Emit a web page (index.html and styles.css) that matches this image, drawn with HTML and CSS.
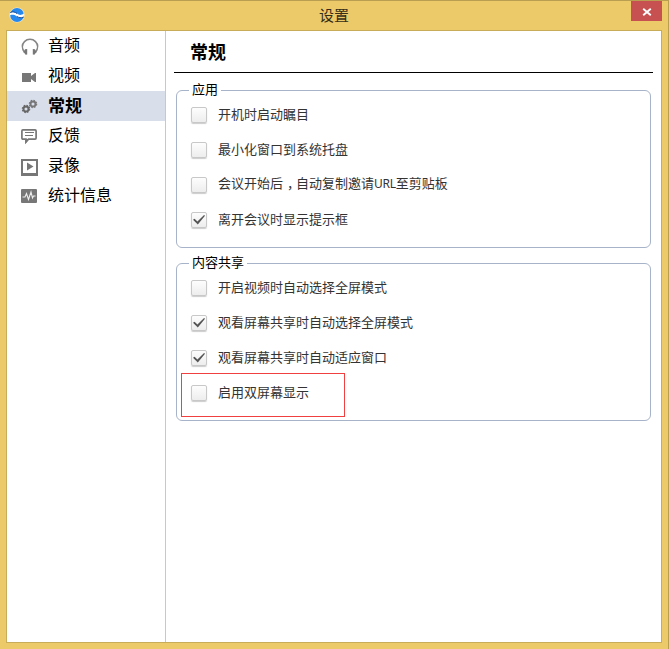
FILE: index.html
```html
<!DOCTYPE html>
<html lang="zh-CN">
<head>
<meta charset="utf-8">
<title>设置</title>
<link rel="stylesheet" href="styles.css">
</head>
<body>
<div class="window">
  <header class="titlebar">
    <svg class="logo" width="16" height="16" viewBox="0 0 16 16">
      <circle cx="8" cy="8" r="7.6" fill="#f5ead0"/>
      <circle cx="8" cy="8" r="6.900" fill="#2588ee"/>
      <path d="M1 5.6C4 4.2 6 5 8 6.6S12 8.7 14.9 6.6V9.8C12 11.6 9.700 10.700 7.500 9.200S3.500 7.500 1 8.200Z" fill="#fff"/>
      <path d="M1.200 5.500C4 4.200 6 5 8 6.500M14.700 10C12 11.400 9.800 10.700 7.800 9.400" fill="none" stroke="#174b94" stroke-width="1"/>
    </svg>
    <h1 class="title">设置</h1>
    <button class="close" aria-label="关闭"><svg width="10" height="10" viewBox="0 0 10 10"><path d="M1.200 1.800L8.800 8.200M8.800 1.800L1.200 8.200" stroke="#fff" stroke-width="1.900"/></svg></button>
  </header>
  <div class="content">
    <nav class="sidebar">
      <a class="item"><svg class="icon" viewBox="0 0 18 18"><path d="M3.600 14.500C.8 10.500.9 6.200 3.500 3.600C6.500.6 11.500.6 14.500 3.600C17.100 6.200 17.200 10.500 14.400 14.500" fill="none" stroke="#858585" stroke-width="1.500"/><path d="M4 11.300L6.200 11V16.500L4.600 16.700L2.600 14ZM14 11.300L11.800 11V16.500L13.400 16.700L15.400 14Z" fill="#777"/></svg><span>音频</span></a>
      <a class="item"><svg class="icon" viewBox="0 0 18 18"><path d="M1 5H10V8L14 5H15V14H14L10 11V14H1Z" fill="#777"/></svg><span>视频</span></a>
      <a class="item selected"><svg class="icon" viewBox="0 1 18 18"><g fill="none" stroke="#666"><circle cx="5" cy="12" r="2.500" stroke-width="1.900"/><circle cx="5" cy="12" r="3.700" stroke-width="1.100" stroke-dasharray="1.600 1.306"/><circle cx="12" cy="7" r="2.500" stroke="#777" stroke-width="1.900"/><circle cx="12" cy="7" r="3.700" stroke="#777" stroke-width="1.100" stroke-dasharray="1.600 1.306"/></g></svg><span>常规</span></a>
      <a class="item"><svg class="icon" viewBox="0 1 18 18"><path d="M1.900 2.900H14.100Q15.100 2.900 15.100 3.900V11.100Q15.100 12.100 14.100 12.100H7.500L5 15V12.100H1.900Q.9 12.100.9 11.100V3.900Q.9 2.900 1.900 2.900Z" fill="none" stroke="#777" stroke-width="1.700"/><path d="M4 5.500H13M4 8.500H12" stroke="#777"/><path d="M4 12H8L4.300 17Z" fill="#777"/></svg><span>反馈</span></a>
      <a class="item"><svg class="icon" viewBox="0 1 18 18"><path d="M0 2H17V19H0ZM2 4V16H15V4Z" fill="#777" fill-rule="evenodd"/><path d="M6 5.500L12.500 9.500L6 13.500Z" fill="#777"/></svg><span>录像</span></a>
      <a class="item"><svg class="icon" viewBox="0 1 18 18"><rect y="2" width="16" height="14" rx="1" fill="#777"/><path d="M1.500 10H4L5.500 6.500L7.500 12.500L10 5L11.500 11L12.500 9H14.500" fill="none" stroke="#eee" stroke-width="1.100"/></svg><span>统计信息</span></a>
    </nav>
    <main class="panel">
      <h2 class="heading">常规</h2>
      <fieldset class="group">
        <legend>应用</legend>
        <label class="option"><input type="checkbox"><span>开机时启动瞩目</span></label>
        <label class="option"><input type="checkbox"><span>最小化窗口到系统托盘</span></label>
        <label class="option"><input type="checkbox"><span>会议开始后<span class="comma">，</span>自动复制邀请<span class="latin">URL</span>至剪贴板</span></label>
        <label class="option"><input type="checkbox" checked><span>离开会议时显示提示框</span></label>
      </fieldset>
      <fieldset class="group">
        <legend>内容共享</legend>
        <label class="option"><input type="checkbox"><span>开启视频时自动选择全屏模式</span></label>
        <label class="option"><input type="checkbox" checked><span>观看屏幕共享时自动选择全屏模式</span></label>
        <label class="option"><input type="checkbox" checked><span>观看屏幕共享时自动适应窗口</span></label>
        <label class="option highlighted"><input type="checkbox"><span>启用双屏幕显示</span></label>
      </fieldset>
    </main>
  </div>
</div>
</body>
</html>
```
FILE: styles.css
```css
*, *::before, *::after { box-sizing: border-box; }
body {
  margin: 0;
  font-family: "Noto Sans CJK SC", sans-serif;
  color: #000;
}
.window {
  display: flex;
  flex-direction: column;
  width: 669px;
  height: 649px;
  padding: 0 6px 6px;
  background: #edca69;
  border-top: 1px solid #b99d51;
  border-right: 1px solid #b99d51;
}
.titlebar {
  display: grid;
  grid-template-columns: 33px 1fr 31px;
  height: 29px;
  flex: none;
}
.logo { margin: 6px 0 0 3px; }
.title {
  margin: 0;
  padding-right: 2px;
  font-size: 15px;
  line-height: 28px;
  font-weight: 400;
  text-align: center;
  color: #352d18;
}
.close {
  display: flex;
  align-items: center;
  justify-content: center;
  width: 31px;
  height: 20px;
  padding: 1px 0 0;
  border: 0;
  background: #c75050;
}
.content {
  display: flex;
  flex: 1;
  background: #fff;
  border: 1px solid #c9ac59;
}
.sidebar {
  width: 159px;
  border-right: 1px solid #c8c8c8;
}
.item {
  display: flex;
  align-items: center;
  gap: 9px;
  height: 30px;
  padding-left: 14px;
  font-size: 16px;
  line-height: 30px;
}
.item span { position: relative; top: -2px; }
.item.selected { background: #d8deea; font-size: 17px; font-weight: 700; }
.item.selected span { top: -1px; }
.icon { width: 18px; height: 18px; margin-top: 2px; flex: none; overflow: visible; }
.panel { flex: 1; padding: 0 8px; }
.heading {
  height: 42px;
  margin: 0 0 9px;
  padding-left: 16px;
  border-bottom: 1px solid #000;
  font-size: 18px;
  line-height: 40px;
  font-weight: 700;
}
.group {
  height: 166px;
  margin: 0 2px 7px;
  padding: 0 0 0 14px;
  border: 1px solid #a6b3c8;
  border-radius: 6px;
}
.group legend {
  height: 16px;
  margin-left: -2px;
  padding: 0 3px;
  font-size: 13px;
  line-height: 14px;
}
.option {
  display: flex;
  align-items: center;
  gap: 11px;
  height: 35px;
  font-size: 13px;
  color: #333;
  position: relative;
  top: -1px;
}
.option > span { line-height: 20px; padding-bottom: 2px; }
.option input {
  appearance: none;
  display: grid;
  place-items: center;
  width: 16px;
  height: 16px;
  margin: 0;
  border: 1px solid #c8c8c8;
  border-radius: 2px;
  background: linear-gradient(#fdfdfd, #ededed);
  box-shadow: 0 1px 1px #ccc;
}
.option input:checked::before {
  content: "";
  width: 12px;
  height: 10px;
  background: #555;
  clip-path: polygon(0 52%, 13% 42%, 37% 70%, 92% 4%, 100% 12%, 40% 100%);
}
.comma { padding: 0 2.500px 0 4px; font-feature-settings: "halt"; }
.latin { font-family: "Noto Sans", sans-serif; font-size: 12px; letter-spacing: -.3px; }
.highlighted::after {
  content: "";
  position: absolute;
  left: -10px;
  top: -2px;
  width: 164px;
  height: 44px;
  border: 1px solid #f04040;
}
```
